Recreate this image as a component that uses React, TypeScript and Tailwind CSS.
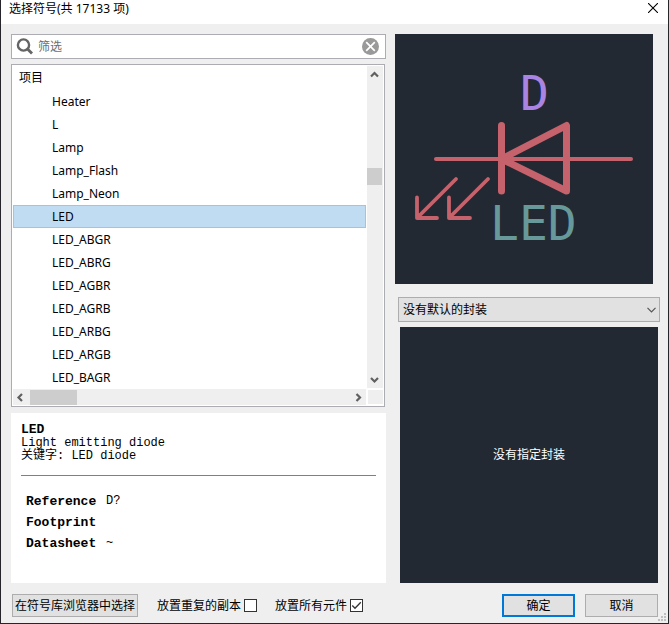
import { useState } from "react";

const SYMBOLS = [
  "Heater",
  "L",
  "Lamp",
  "Lamp_Flash",
  "Lamp_Neon",
  "LED",
  "LED_ABGR",
  "LED_ABRG",
  "LED_AGBR",
  "LED_AGRB",
  "LED_ARBG",
  "LED_ARGB",
  "LED_BAGR",
];

const FIELDS = [
  { name: "Reference", value: "D?" },
  { name: "Footprint", value: "" },
  { name: "Datasheet", value: "~" },
];

type Direction = "up" | "down" | "left" | "right";

const ARROWS: Record<Direction, string> = {
  up: "M1 6.5 L4.5 3 L8 6.5",
  down: "M1 2 L4.5 5.5 L8 2",
  left: "M6 1 L2.5 4.5 L6 8",
  right: "M2.5 1 L6 4.5 L2.5 8",
};

function ScrollArrow({ direction }: { direction: Direction }) {
  return (
    <button
      type="button"
      aria-label={direction}
      className="flex h-4 w-[15px] shrink-0 items-center justify-center"
    >
      <svg viewBox="0 0 9 9" className="size-[9px]" fill="none" stroke="#606060" strokeWidth="2.2">
        <path d={ARROWS[direction]} />
      </svg>
    </button>
  );
}

function TitleBar() {
  return (
    <header className="flex h-6 items-start justify-between bg-white pl-2 pr-2.5">
      <h1 className="text-xs leading-[18px] text-black">选择符号(共 17133 项)</h1>
      <button type="button" aria-label="关闭" className="pt-[3px]">
        <svg viewBox="0 0 10 10" className="size-2.5" fill="none" stroke="#000" strokeWidth="1.1">
          <path d="M0 0 L10 10 M10 0 L0 10" />
        </svg>
      </button>
    </header>
  );
}

function FilterBox() {
  return (
    <div className="flex h-[25px] items-center border border-[#abadb3] bg-white pl-1 pr-1.5">
      <svg viewBox="0 0 18 18" className="size-[18px] shrink-0" fill="none" stroke="#646464">
        <circle cx="7.5" cy="7" r="5.6" strokeWidth="2.4" />
        <path d="M11.5 11 L16 15.5" strokeWidth="2.8" />
      </svg>
      <input
        type="text"
        aria-label="筛选"
        placeholder="筛选"
        className="h-5 min-w-0 flex-1 pl-1 text-xs text-black outline-none placeholder:text-[#6d6d6d]"
      />
      <button type="button" aria-label="清除" className="shrink-0">
        <svg viewBox="0 0 17 17" className="size-[17px]" fill="none">
          <circle cx="8.5" cy="8.5" r="8.5" fill="#999" />
          <path d="M4.2 4.2 L12.8 12.8 M12.8 4.2 L4.2 12.8" stroke="#fff" strokeWidth="1.7" />
        </svg>
      </button>
    </div>
  );
}

function SymbolList() {
  const [selected, setSelected] = useState("LED");
  return (
    <section className="mr-px border border-[#abadb3] bg-white p-px">
      <div className="flex">
        <div className="min-w-0 flex-1">
          <h2 className="h-6 pl-1.5 text-xs leading-[23px] text-black">项目</h2>
          <ul role="listbox" aria-label="项目">
            {SYMBOLS.map((name) => (
              <li
                key={name}
                role="option"
                aria-selected={name === selected}
                onClick={() => setSelected(name)}
                className={
                  name === selected
                    ? "h-[23px] border border-[#90c8f6] bg-[#c0dcf2] pl-[38px] text-xs leading-[21px] text-black"
                    : "h-[23px] border border-transparent pl-[38px] text-xs leading-[21px] text-black"
                }
              >
                {name}
              </li>
            ))}
          </ul>
        </div>
        <div className="mb-px ml-px flex w-4 flex-col bg-[#efefef]">
          <ScrollArrow direction="up" />
          <div className="flex-1 pt-[86px]">
            <div className="h-[17px] w-[15px] bg-[#cdcdcd]" />
          </div>
          <ScrollArrow direction="down" />
        </div>
      </div>
      <div className="flex h-4">
        <div className="flex flex-1 items-center bg-[#efefef]">
          <ScrollArrow direction="left" />
          <div className="flex-1 pl-0.5">
            <div className="h-[15px] w-[47px] bg-[#cdcdcd]" />
          </div>
          <ScrollArrow direction="right" />
        </div>
        <div className="mb-px ml-0.5 mt-px w-[15px] bg-[#efefef]" />
      </div>
    </section>
  );
}

function Details() {
  return (
    <section className="mt-1.5 flex-1 bg-white px-2.5 pt-[9px] font-['Liberation_Mono','Noto_Sans_CJK_SC',monospace] text-xs leading-[13px] text-black">
      <h2 className="text-[13px] font-bold leading-[15px]">LED</h2>
      <p>Light emitting diode</p>
      <p>关键字: LED diode</p>
      <hr className="mt-3 border-[#808080]" />
      <table className="ml-[5px] mt-[15px]">
        <tbody>
          {FIELDS.map((field) => (
            <tr key={field.name} className="h-[21px]">
              <th scope="row" className="w-20 p-0 text-left text-[13px] font-bold">
                {field.name}
              </th>
              <td className="p-0">{field.value}</td>
            </tr>
          ))}
        </tbody>
      </table>
    </section>
  );
}

function SymbolPreview() {
  return (
    <div className="mr-[7px] bg-[#222932]">
      <svg viewBox="0 0 258 250" className="block w-full" fill="none" strokeLinecap="round" strokeLinejoin="round">
        <g stroke="#c5626c">
          <path d="M41 125 H236" strokeWidth="4" />
          <path d="M106.500 91.500 V157" strokeWidth="7" />
          <path d="M106.500 125 L171.500 91.500 V157 Z" strokeWidth="7" />
          <path d="M61 145 L22 184 M22 163.500 V184 H42" strokeWidth="3.800" />
          <path d="M93 145 L54 184 M54 163.500 V184 H75" strokeWidth="3.800" />
        </g>
        <g fontFamily="'DejaVu Sans Mono', monospace" fontSize="48">
          <text x="125" y="76" fill="#a984e2">
            D
          </text>
          <text x="95" y="206" fill="#67999a">
            LED
          </text>
        </g>
      </svg>
    </div>
  );
}

function FootprintSelect() {
  return (
    <div className="relative ml-[3px] mt-[13px]">
      <select
        aria-label="封装"
        className="block h-[25px] w-full appearance-none border border-[#adadad] bg-[#e1e1e1] pl-1 text-xs text-black"
      >
        <option>没有默认的封装</option>
      </select>
      <svg
        viewBox="0 0 9 6"
        className="pointer-events-none absolute right-1 top-2.5 h-1.5 w-[9px]"
        fill="none"
        stroke="#555"
        strokeWidth="1.2"
      >
        <path d="M0.5 0.8 L4.5 4.8 L8.5 0.8" />
      </svg>
    </div>
  );
}

function CheckOption({ label, defaultChecked }: { label: string; defaultChecked?: boolean }) {
  return (
    <label className="flex items-center gap-[3px] text-xs text-black">
      {label}
      <span className="grid size-[13px]">
        <input
          type="checkbox"
          defaultChecked={defaultChecked}
          className="peer col-start-1 row-start-1 size-[13px] appearance-none border border-[#333] bg-white"
        />
        <svg
          viewBox="0 0 13 13"
          className="pointer-events-none invisible col-start-1 row-start-1 size-[13px] peer-checked:visible"
          fill="none"
          stroke="#333"
          strokeWidth="1.3"
        >
          <path d="M2.3 6.500 L5 9.300 L10.800 3.300" />
        </svg>
      </span>
    </label>
  );
}

function Footer() {
  return (
    <footer className="flex h-[23px] items-center text-xs text-black">
      <button type="button" className="ml-px h-full w-[126px] whitespace-nowrap border border-[#adadad] bg-[#e1e1e1]">
        在符号库浏览器中选择
      </button>
      <div className="ml-[19px] flex gap-[18px]">
        <CheckOption label="放置重复的副本" />
        <CheckOption label="放置所有元件" defaultChecked />
      </div>
      <div className="ml-auto mr-0.5 flex h-full gap-2.5">
        <button type="button" className="w-[73px] border-2 border-[#0078d7] bg-[#e1e1e1]">
          确定
        </button>
        <button type="button" className="w-[73px] border border-[#adadad] bg-[#e1e1e1]">
          取消
        </button>
      </div>
    </footer>
  );
}

function ResizeGrip() {
  return (
    <svg viewBox="0 0 8 8" className="absolute bottom-0.5 right-0.5 size-2" fill="#bfbfbf">
      <path d="M6 0h2v2h-2z M3 3h2v2h-2z M6 3h2v2h-2z M0 6h2v2h-2z M3 6h2v2h-2z M6 6h2v2h-2z" />
    </svg>
  );
}

export default function App() {
  return (
    <div className="relative flex min-h-screen flex-col border-x border-b border-[#25252b] bg-[#efefef] font-['Noto_Sans','Noto_Sans_CJK_SC',sans-serif]">
      <TitleBar />
      <main className="flex flex-1 flex-col gap-[11px] pb-1.5 pl-2.5 pr-2 pt-2.5">
        <div className="flex flex-1 gap-[9px]">
          <div className="flex min-w-0 flex-1 flex-col">
            <FilterBox />
            <div className="h-[5px]" />
            <SymbolList />
            <Details />
          </div>
          <div className="flex w-[265px] shrink-0 flex-col">
            <SymbolPreview />
            <FootprintSelect />
            <div className="ml-[5px] mr-0.5 mt-[5px] flex flex-1 items-center justify-center bg-[#222932] text-xs text-white">
              没有指定封装
            </div>
          </div>
        </div>
        <Footer />
      </main>
      <ResizeGrip />
    </div>
  );
}
